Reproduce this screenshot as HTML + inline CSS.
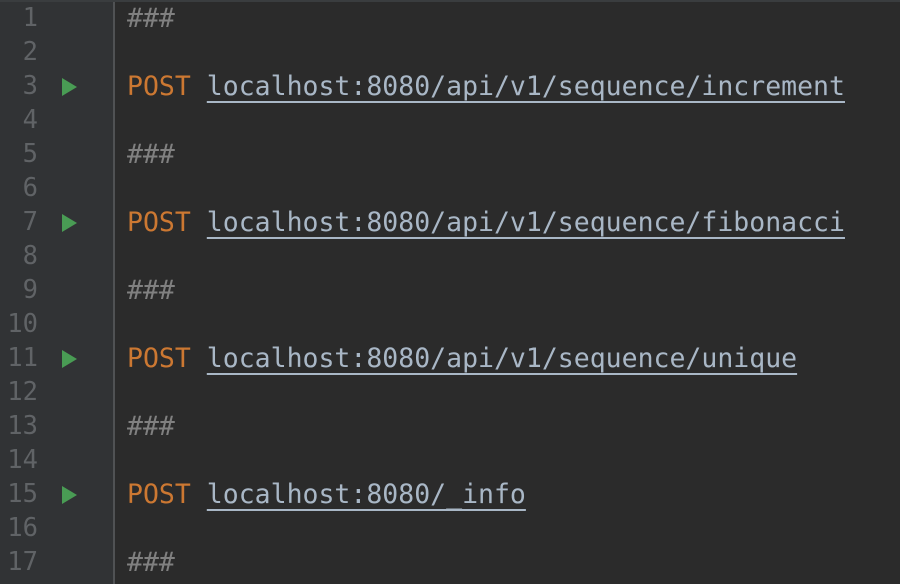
<!DOCTYPE html>
<html><head><style>
html,body{margin:0;padding:0;}
body{width:900px;height:584px;background:#2b2b2b;position:relative;overflow:hidden;font-family:"DejaVu Sans Mono","Liberation Mono",monospace;font-size:26.5px;}
.top{position:absolute;left:0;top:0;width:900px;height:2px;background:#3a3d3f;}
.gut{position:absolute;left:0;top:2px;width:113px;height:582px;background:#313335;}
.sep{position:absolute;left:113px;top:2px;width:2px;height:582px;background:#505254;}
.ln{position:absolute;left:0;width:38px;text-align:right;color:#606366;height:34px;line-height:34px;font-size:25.5px;}
.tri{position:absolute;left:62px;width:0;height:0;border-top:9px solid transparent;border-bottom:9px solid transparent;border-left:15px solid #499c54;}
.code{position:absolute;left:127px;height:34px;line-height:34px;white-space:pre;color:#a9b7c6;margin-top:1px;}
.c{color:#808080;}
.k{color:#cc7832;}
.u{text-decoration:underline;text-decoration-color:#a9b7c6;text-underline-offset:6px;text-decoration-thickness:1.5px;}
.d{color:#555;}
</style></head><body>
<div class="top"></div><div class="gut"></div><div class="sep"></div>
<div class="ln" style="top:1px">1</div><div class="code c" style="top:1px">###</div>
<div class="ln" style="top:35px">2</div>
<div class="ln" style="top:69px">3</div><div class="tri" style="top:78px"></div><div class="code" style="top:69px"><span class="k">POST</span> <span class="u">localhost:8080/api/v1/sequence/increment</span></div>
<div class="ln" style="top:103px">4</div>
<div class="ln" style="top:137px">5</div><div class="code c" style="top:137px">###</div>
<div class="ln" style="top:171px">6</div>
<div class="ln" style="top:205px">7</div><div class="tri" style="top:214px"></div><div class="code" style="top:205px"><span class="k">POST</span> <span class="u">localhost:8080/api/v1/sequence/fibonacci</span></div>
<div class="ln" style="top:239px">8</div>
<div class="ln" style="top:273px">9</div><div class="code c" style="top:273px">###</div>
<div class="ln" style="top:307px">10</div>
<div class="ln" style="top:341px">11</div><div class="tri" style="top:350px"></div><div class="code" style="top:341px"><span class="k">POST</span> <span class="u">localhost:8080/api/v1/sequence/unique</span></div>
<div class="ln" style="top:375px">12</div>
<div class="ln" style="top:409px">13</div><div class="code c" style="top:409px">###</div>
<div class="ln" style="top:443px">14</div>
<div class="ln" style="top:477px">15</div><div class="tri" style="top:486px"></div><div class="code" style="top:477px"><span class="k">POST</span> <span class="u">localhost:8080/_info</span></div>
<div class="ln" style="top:511px">16</div>
<div class="ln" style="top:545px">17</div><div class="code c" style="top:545px">###</div>
</body></html>
